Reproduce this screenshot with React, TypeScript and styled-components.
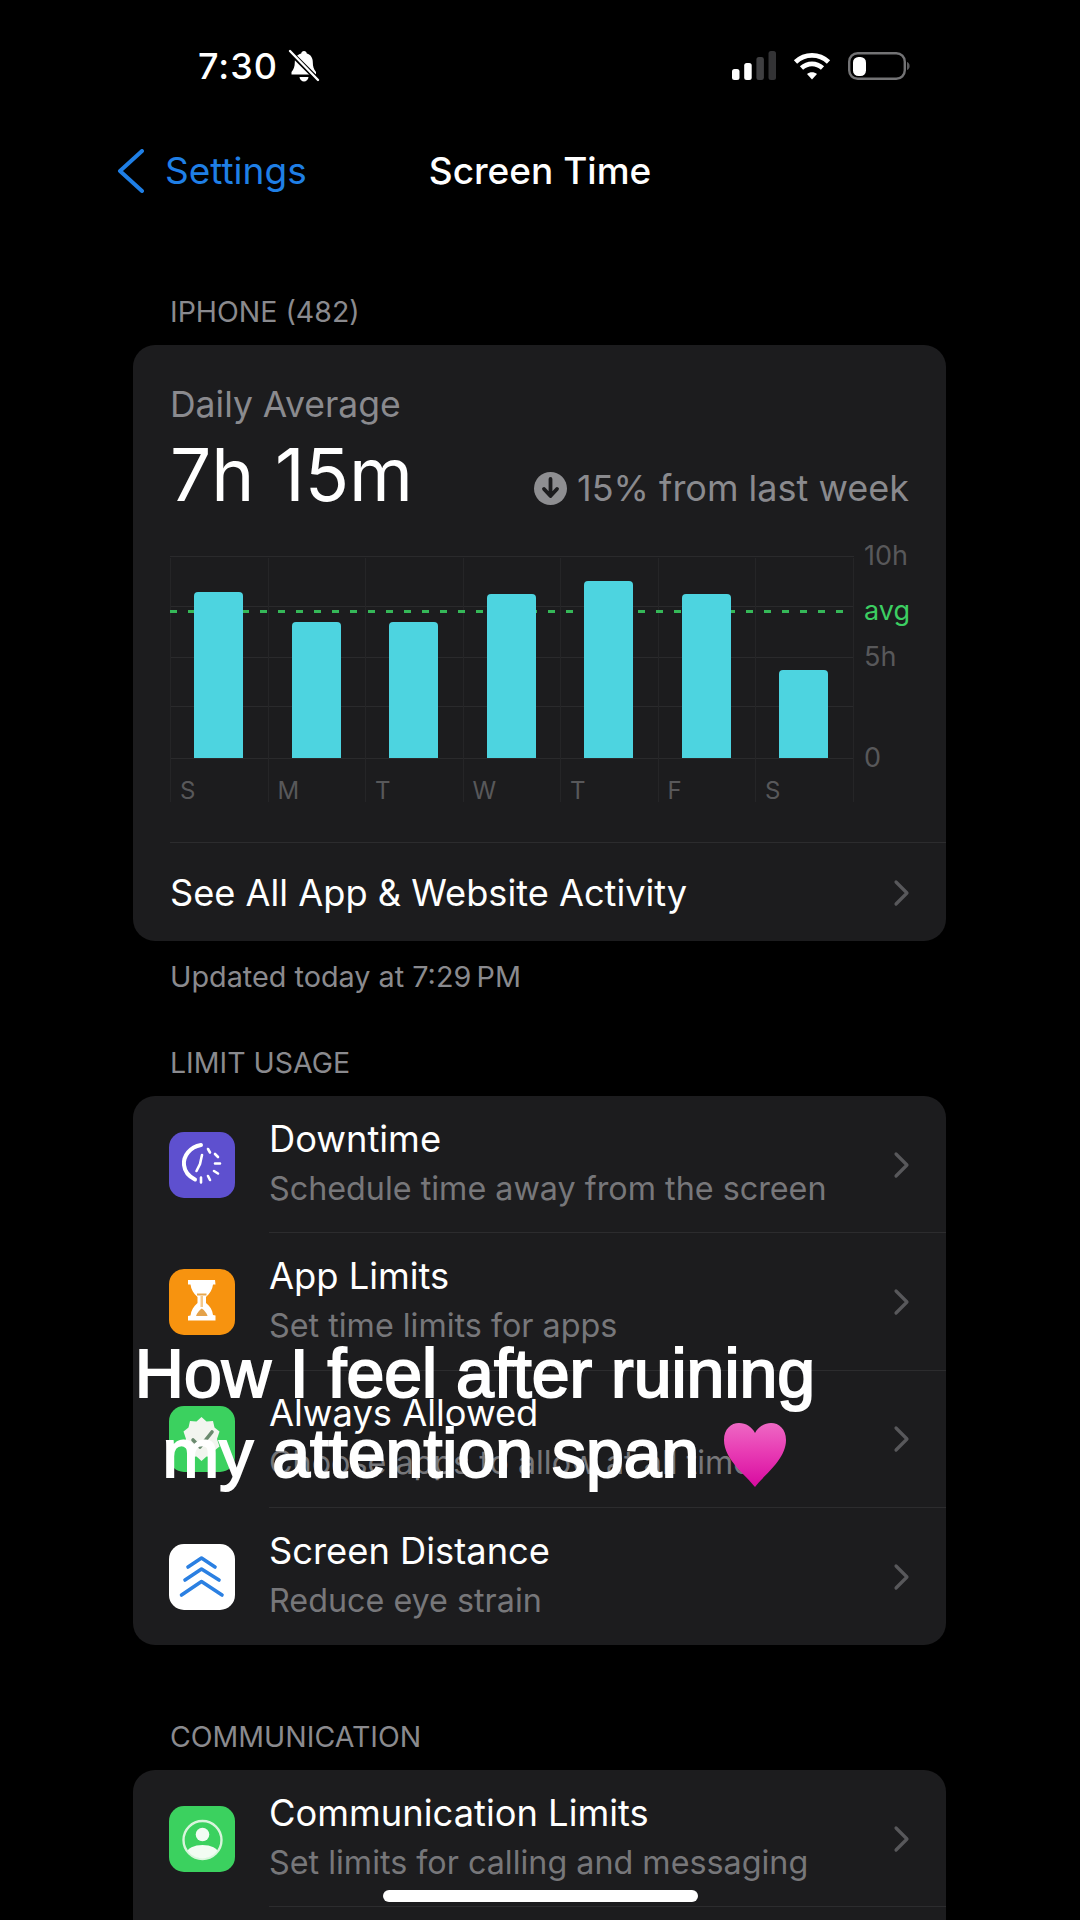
import React from 'react';
import styled, { createGlobalStyle } from 'styled-components';

const GlobalStyle = createGlobalStyle`
    html, body {
        margin: 0;
        padding: 0;
        background: #000;
    }
    * {
        box-sizing: border-box;
    }
`;

const FONT = `Inter, "Liberation Sans", sans-serif`;

const bars = [
    { day: 'S', hours: 166 },
    { day: 'M', hours: 136 },
    { day: 'T', hours: 136 },
    { day: 'W', hours: 164 },
    { day: 'T', hours: 177 },
    { day: 'F', hours: 164 },
    { day: 'S', hours: 88 },
];

const BellSlash = () => (
    <svg width="32" height="34" viewBox="0 0 32 34">
        <path d="M16 2c1.600 0 2.600 1 2.800 2.400 4 1 6 4.600 6 8.800 0 4.500 1 6.800 3.200 9.800v2.500H3.500V23c2.200-3 3.300-5.300 3.300-9.800 0-4.200 2.200-7.800 6.400-8.800C13.400 3 14.400 2 16 2z" fill="#fff" />
        <path d="M11.500 28h9c-.4 2.800-2.200 4.500-4.500 4.500s-4.100-1.700-4.500-4.500z" fill="#fff" />
        <path d="M2 3l28 28" stroke="#000" strokeWidth="5" />
        <path d="M2 2l28 29" stroke="#fff" strokeWidth="2.400" strokeLinecap="round" />
    </svg>
);

const SignalBars = () => (
    <svg width="44" height="30" viewBox="0 0 44 30">
        <rect x="0" y="18" width="7.500" height="11" rx="2.500" fill="#fff" />
        <rect x="12.200" y="12" width="7.500" height="17" rx="2.500" fill="#fff" />
        <rect x="24.400" y="6" width="7.500" height="23" rx="2.500" fill="#3f3f41" />
        <rect x="36.500" y="0" width="7.500" height="29" rx="2.500" fill="#333335" />
    </svg>
);

const Wifi = () => (
    <svg width="38" height="28" viewBox="0 0 38 28" fill="none" stroke="#fff" strokeWidth="4.800">
        <path d="M2.500 10c9.500-8.800 23.500-8.800 33 0" />
        <path d="M8.500 16c6.200-5.500 14.800-5.500 21 0" />
        <path d="M19 27.500l-5-5.500c2.800-2.200 7.200-2.200 10 0z" fill="#fff" stroke="none" />
    </svg>
);

const Battery = () => (
    <svg width="62" height="28" viewBox="0 0 62 28">
        <rect x="1.200" y="1.200" width="55.600" height="25.600" rx="8.500" fill="none" stroke="#737375" strokeWidth="2.400" />
        <rect x="5" y="5" width="13" height="19" rx="5.500" fill="#fff" />
        <path d="M59 10c1.600.6 2.600 2 2.600 4s-1 3.400-2.600 4z" fill="#5c5c5e" />
    </svg>
);

const BackChevron = () => (
    <svg width="28" height="44" viewBox="0 0 28 44" fill="none">
        <path d="M26 2L4 22l22 20" stroke="#1f7fe6" strokeWidth="4" strokeLinecap="round" strokeLinejoin="round" />
    </svg>
);

const RowChevron = () => (
    <svg width="18" height="28" viewBox="0 0 18 28" fill="none">
        <path d="M4 3l11 11L4 25" stroke="#58585b" strokeWidth="3.200" strokeLinecap="round" strokeLinejoin="round" />
    </svg>
);

const DownArrowBadge = () => (
    <svg width="33" height="33" viewBox="0 0 33 33">
        <circle cx="16.500" cy="16.500" r="16.500" fill="#8e8e91" />
        <path d="M16.500 7v16M10 17l6.500 7 6.500-7" fill="none" stroke="#1c1c1e" strokeWidth="3.800" strokeLinecap="round" strokeLinejoin="round" />
    </svg>
);

const DowntimeGlyph = () => (
    <svg width="66" height="66" viewBox="0 0 66 66" fill="none" stroke="#fff" strokeLinecap="round">
        <path d="M32 13C21 15 14 24 15 33c.7 6.500 5 11.500 11 14.500" strokeWidth="4" />
        <path d="M33 23l-2 9-3.500 7" strokeWidth="2.600" />
        <path d="M39 17l2 3.500M46 22l3 3M46 31.500h5M45 39l4 2.500M39 44l2 4M32 45.500v5" strokeWidth="2.600" />
    </svg>
);

const HourglassGlyph = () => (
    <svg width="66" height="66" viewBox="0 0 66 66">
        <path d="M19 11h27l.5 4.500H44c-.5 5-3 9-7 12.500v6c4 3 6.500 7 7 12l2.500.5V51.500H19V47l2.500-.5c.5-5 3-9 7-12.500v-6c-4-3.500-6.500-7.500-7-12.500H19z" fill="#fff" />
        <path d="M28 24.500h9.500v2H28z" fill="#e8a84e" />
        <path d="M31.500 27h2.500v11h-2.500z" fill="#f4c98c" />
        <path d="M27 47c1-3 3-5.500 5.800-7.500 2.800 2 4.800 4.500 5.800 7.500z" fill="#e4a24a" />
    </svg>
);

const BadgeGlyph = () => (
    <svg width="66" height="66" viewBox="0 0 66 66">
        <path d="M32.500 11l5 4.500 6.500-.5 1.500 6.500 5 4-2.500 7.500 2.500 7.500-5 4-1.500 6.500-6.500-.5-5 4.500-5-4.500-6.500.5-1.500-6.500-5-4 2.500-7.500-2.500-7.500 5-4 1.500-6.500 6.500.5z" fill="#f2f5ef" />
        <path d="M24 34l7 7 12-15" fill="none" stroke="#6a8a6e" strokeWidth="3.600" strokeLinecap="round" strokeLinejoin="round" />
    </svg>
);

const DistanceGlyph = () => (
    <svg width="66" height="66" viewBox="0 0 66 66" fill="none" stroke="#2b80e2" strokeWidth="3.600" strokeLinecap="round" strokeLinejoin="round">
        <path d="M19 23l13.500-9L46 23" />
        <path d="M16 36l16.500-11L50 36" />
        <path d="M12.500 51l20-13.500L53 51" />
    </svg>
);

const PersonGlyph = () => (
    <svg width="66" height="66" viewBox="0 0 66 66">
        <defs>
            <clipPath id="personRing">
                <circle cx="33.500" cy="34" r="18.500" />
            </clipPath>
        </defs>
        <circle cx="33.500" cy="34" r="19" fill="none" stroke="#d8f5dc" strokeWidth="2.400" />
        <circle cx="33.500" cy="28.500" r="6.800" fill="#f2fcf3" />
        <ellipse cx="33.500" cy="47" rx="15.500" ry="8" fill="#f2fcf3" clipPath="url(#personRing)" />
    </svg>
);

const Heart = () => (
    <svg width="64" height="65" viewBox="0 0 64 65">
        <defs>
            <linearGradient id="heartFill" x1="0" y1="0" x2="0" y2="1">
                <stop offset="0" stopColor="#ee68c4" />
                <stop offset="0.45" stopColor="#e83cb4" />
                <stop offset="1" stopColor="#d80aa0" />
            </linearGradient>
        </defs>
        <path d="M32 65C24 54 1 38 1 18 1 7 8 1 16 1c7 0 13 4 16 10C35 5 41 1 48 1c8 0 15 6 15 17 0 20-23 36-31 47z" fill="url(#heartFill)" />
    </svg>
);

const rowsLimit = [
    { title: 'Downtime', sub: 'Schedule time away from the screen', color: '#5e50cf', glyph: <DowntimeGlyph /> },
    { title: 'App Limits', sub: 'Set time limits for apps', color: '#f7930f', glyph: <HourglassGlyph /> },
    { title: 'Always Allowed', sub: 'Choose apps to allow at all times', color: '#3bd15f', glyph: <BadgeGlyph /> },
    { title: 'Screen Distance', sub: 'Reduce eye strain', color: '#ffffff', glyph: <DistanceGlyph /> },
];

export default function App() {
    return (
        <Screen>
            <GlobalStyle />
            <StatusBar>
                <StatusLeft>
                    <Clock>7:30</Clock>
                    <BellSlash />
                </StatusLeft>
                <StatusRight>
                    <SignalBars />
                    <Wifi />
                    <Battery />
                </StatusRight>
            </StatusBar>
            <NavBar>
                <BackLink>
                    <BackChevron />
                    <BackLabel>Settings</BackLabel>
                </BackLink>
                <NavTitle>Screen Time</NavTitle>
            </NavBar>
            <Content>
                <SectionHeader $top={81}>IPHONE (482)</SectionHeader>
                <Card>
                    <CardIntro>
                        <DailyLabel>Daily Average</DailyLabel>
                        <TotalRow>
                            <Total>7h 15m</Total>
                            <Change>
                                <DownArrowBadge />
                                <ChangeText>15% from last week</ChangeText>
                            </Change>
                        </TotalRow>
                    </CardIntro>
                    <Chart>
                        <Plot>
                            <GridLines width="684" height="246" viewBox="0 0 684 246">
                                {[0, 50, 101, 150, 202].map((y) => (
                                    <line key={y} x1="0" x2="684" y1={y + 0.5} y2={y + 0.5} stroke="#2a2a2c" strokeWidth="1" />
                                ))}
                                {[0, 98, 195, 293, 390, 488, 585, 683].map((x) => (
                                    <line key={x} x1={x + 0.5} x2={x + 0.5} y1="2" y2="246" stroke="#252527" strokeWidth="1" />
                                ))}
                            </GridLines>
                            <AvgLine />
                            <Columns>
                                {bars.map((bar, i) => (
                                    <Column key={i}>
                                        <BarSlot>
                                            <Bar style={{ height: bar.hours }} />
                                        </BarSlot>
                                        <DayLabel>{bar.day}</DayLabel>
                                    </Column>
                                ))}
                            </Columns>
                        </Plot>
                        <Axis>
                            <AxisLabel $height={55}>10h</AxisLabel>
                            <AvgLabel $height={46}>avg</AvgLabel>
                            <AxisLabel $height={101}>5h</AxisLabel>
                            <AxisLabel $height={40}>0</AxisLabel>
                        </Axis>
                    </Chart>
                    <ActivityRow>
                        <ActivityLabel>See All App &amp; Website Activity</ActivityLabel>
                        <RowChevron />
                    </ActivityRow>
                </Card>
                <Footnote>Updated today at 7:29&#8201;PM</Footnote>
                <SectionHeader $top={46}>LIMIT USAGE</SectionHeader>
                <Card>
                    {rowsLimit.map((row, i) => (
                        <ListRow key={row.title} $last={i === rowsLimit.length - 1}>
                            <IconTile $color={row.color}>{row.glyph}</IconTile>
                            <RowBody>
                                <RowTitle>{row.title}</RowTitle>
                                <RowSub>{row.sub}</RowSub>
                            </RowBody>
                            <RowChevron />
                        </ListRow>
                    ))}
                </Card>
                <SectionHeader $top={71}>COMMUNICATION</SectionHeader>
                <Card>
                    <ListRow>
                        <IconTile $color="#3bd15f">
                            <PersonGlyph />
                        </IconTile>
                        <RowBody>
                            <RowTitle>Communication Limits</RowTitle>
                            <RowSub>Set limits for calling and messaging</RowSub>
                        </RowBody>
                        <RowChevron />
                    </ListRow>
                    {/* next row runs past the bottom of the screen */}
                    <ListRow $last />
                </Card>
            </Content>
            <Caption>
                <CaptionLine>How I feel after ruining</CaptionLine>
                <CaptionLine>
                    my attention span
                    <CaptionHeart>
                        <Heart />
                    </CaptionHeart>
                </CaptionLine>
            </Caption>
            <HomeIndicator />
        </Screen>
    );
}

const Screen = styled.div`
    position: relative;
    width: 1080px;
    height: 1920px;
    overflow: hidden;
    background: #000;
    font-family: ${FONT};
    color: #fff;
`;

const StatusBar = styled.header`
    display: flex;
    align-items: center;
    justify-content: space-between;
    height: 132px;
    padding: 0 170px 0 198px;
`;

const StatusLeft = styled.div`
    display: flex;
    align-items: center;
    gap: 10px;
`;

const Clock = styled.span`
    font-size: 36px;
    font-weight: 500;
    letter-spacing: 1px;
`;

const StatusRight = styled.div`
    display: flex;
    align-items: center;
    gap: 17px;
`;

const NavBar = styled.nav`
    position: relative;
    display: flex;
    align-items: center;
    justify-content: center;
    height: 78px;
    padding-bottom: 2px;
`;

const BackLink = styled.div`
    position: absolute;
    left: 116px;
    top: 17px;
    display: flex;
    align-items: center;
    gap: 21px;
`;

const BackLabel = styled.span`
    margin-top: -2px;
    font-size: 37px;
    color: #1f7fe6;
`;

const NavTitle = styled.h1`
    margin: 0;
    font-size: 37px;
    font-weight: 500;
`;

const Content = styled.main`
    padding: 0 134px 0 133px;
`;

const SectionHeader = styled.h2<{ $top: number }>`
    margin: ${(p) => p.$top}px 0 14px;
    padding-left: 37px;
    height: 40px;
    line-height: 42px;
    font-size: 28.500px;
    font-weight: 400;
    color: #8a8a8e;
`;

const Card = styled.section`
    background: #1c1c1e;
    border-radius: 22px;
    overflow: hidden;
`;

const CardIntro = styled.div`
    padding: 36px 37px 0;
`;

const DailyLabel = styled.div`
    height: 52px;
    line-height: 48px;
    font-size: 35.500px;
    color: #8a8a8e;
`;

const TotalRow = styled.div`
    display: flex;
    align-items: flex-end;
    justify-content: space-between;
`;

const Total = styled.div`
    font-size: 73px;
    line-height: 84px;
`;

const Change = styled.div`
    display: flex;
    align-items: center;
    gap: 10px;
    margin-bottom: 7px;
    font-size: 36px;
    color: #8a8a8e;
`;

const ChangeText = styled.span``;

const Chart = styled.div`
    display: flex;
    margin-top: 39px;
    padding-left: 37px;
`;

const Plot = styled.div`
    position: relative;
    width: 684px;
    height: 246px;
`;

const GridLines = styled.svg`
    position: absolute;
    inset: 0;
`;

const Columns = styled.div`
    position: relative;
    display: grid;
    grid-template-columns: repeat(7, 97.500px);
    height: 100%;
`;

const Column = styled.div`
    display: flex;
    flex-direction: column;
`;

const BarSlot = styled.div`
    display: flex;
    align-items: flex-end;
    justify-content: center;
    height: 202px;
`;

const Bar = styled.div`
    width: 49px;
    background: #4dd4e0;
    border-radius: 4px 4px 0 0;
`;

const DayLabel = styled.span`
    margin-top: 18px;
    padding-left: 10px;
    font-size: 24px;
    color: #58585a;
`;

const AvgLine = styled.div`
    position: absolute;
    left: 0;
    right: 0;
    top: 54px;
    height: 3px;
    background: repeating-linear-gradient(90deg, #35b858 0 7px, transparent 7px 18px);
`;

const Axis = styled.div`
    display: flex;
    flex-direction: column;
    margin-top: -16px;
    padding-left: 10px;
`;

const AxisLabel = styled.span<{ $height: number }>`
    height: ${(p) => p.$height}px;
    line-height: 32px;
    font-size: 27px;
    color: #58585a;
`;

const AvgLabel = styled(AxisLabel)`
    color: #3ccf62;
`;

const ActivityRow = styled.div`
    display: flex;
    align-items: center;
    justify-content: space-between;
    height: 99px;
    margin: 40px 0 0 37px;
    padding: 2px 36px 0 0;
    border-top: 1px solid #2c2c2e;
`;

const ActivityLabel = styled.span`
    font-size: 36.200px;
`;

const Footnote = styled.div`
    margin-top: 15px;
    padding-left: 37px;
    height: 40px;
    line-height: 42px;
    font-size: 28.800px;
    color: #8a8a8e;
`;

const ListRow = styled.div<{ $last?: boolean }>`
    position: relative;
    display: flex;
    align-items: center;
    height: 137.300px;
    padding: 0 36px;
    &::after {
        content: '';
        display: ${(p) => (p.$last ? 'none' : 'block')};
        position: absolute;
        left: 136px;
        right: 0;
        bottom: 0;
        border-bottom: 1px solid #2c2c2e;
    }
`;

const IconTile = styled.div<{ $color: string }>`
    display: flex;
    flex: none;
    width: 66px;
    height: 66px;
    border-radius: 15px;
    background: ${(p) => p.$color};
`;

const RowBody = styled.div`
    flex: 1;
    margin-top: -2px;
    padding-left: 34px;
`;

const RowTitle = styled.div`
    font-size: 36.300px;
    line-height: 50px;
`;

const RowSub = styled.div`
    font-size: 32.300px;
    line-height: 50px;
    color: #77777a;
`;

const Caption = styled.div`
    position: absolute;
    left: 0;
    right: 0;
    top: 1333px;
    padding-right: 130px;
    text-align: center;
    font-family: "Liberation Sans", sans-serif;
    font-size: 68px;
    line-height: 80px;
    -webkit-text-stroke: 2px #fff;
`;

const CaptionLine = styled.div`
    display: flex;
    justify-content: center;
    align-items: center;
    gap: 24px;
`;

const CaptionHeart = styled.span`
    display: flex;
    margin-top: 2px;
`;

const HomeIndicator = styled.div`
    position: absolute;
    left: 383px;
    top: 1890px;
    width: 315px;
    height: 12px;
    border-radius: 6px;
    background: #fff;
`;
